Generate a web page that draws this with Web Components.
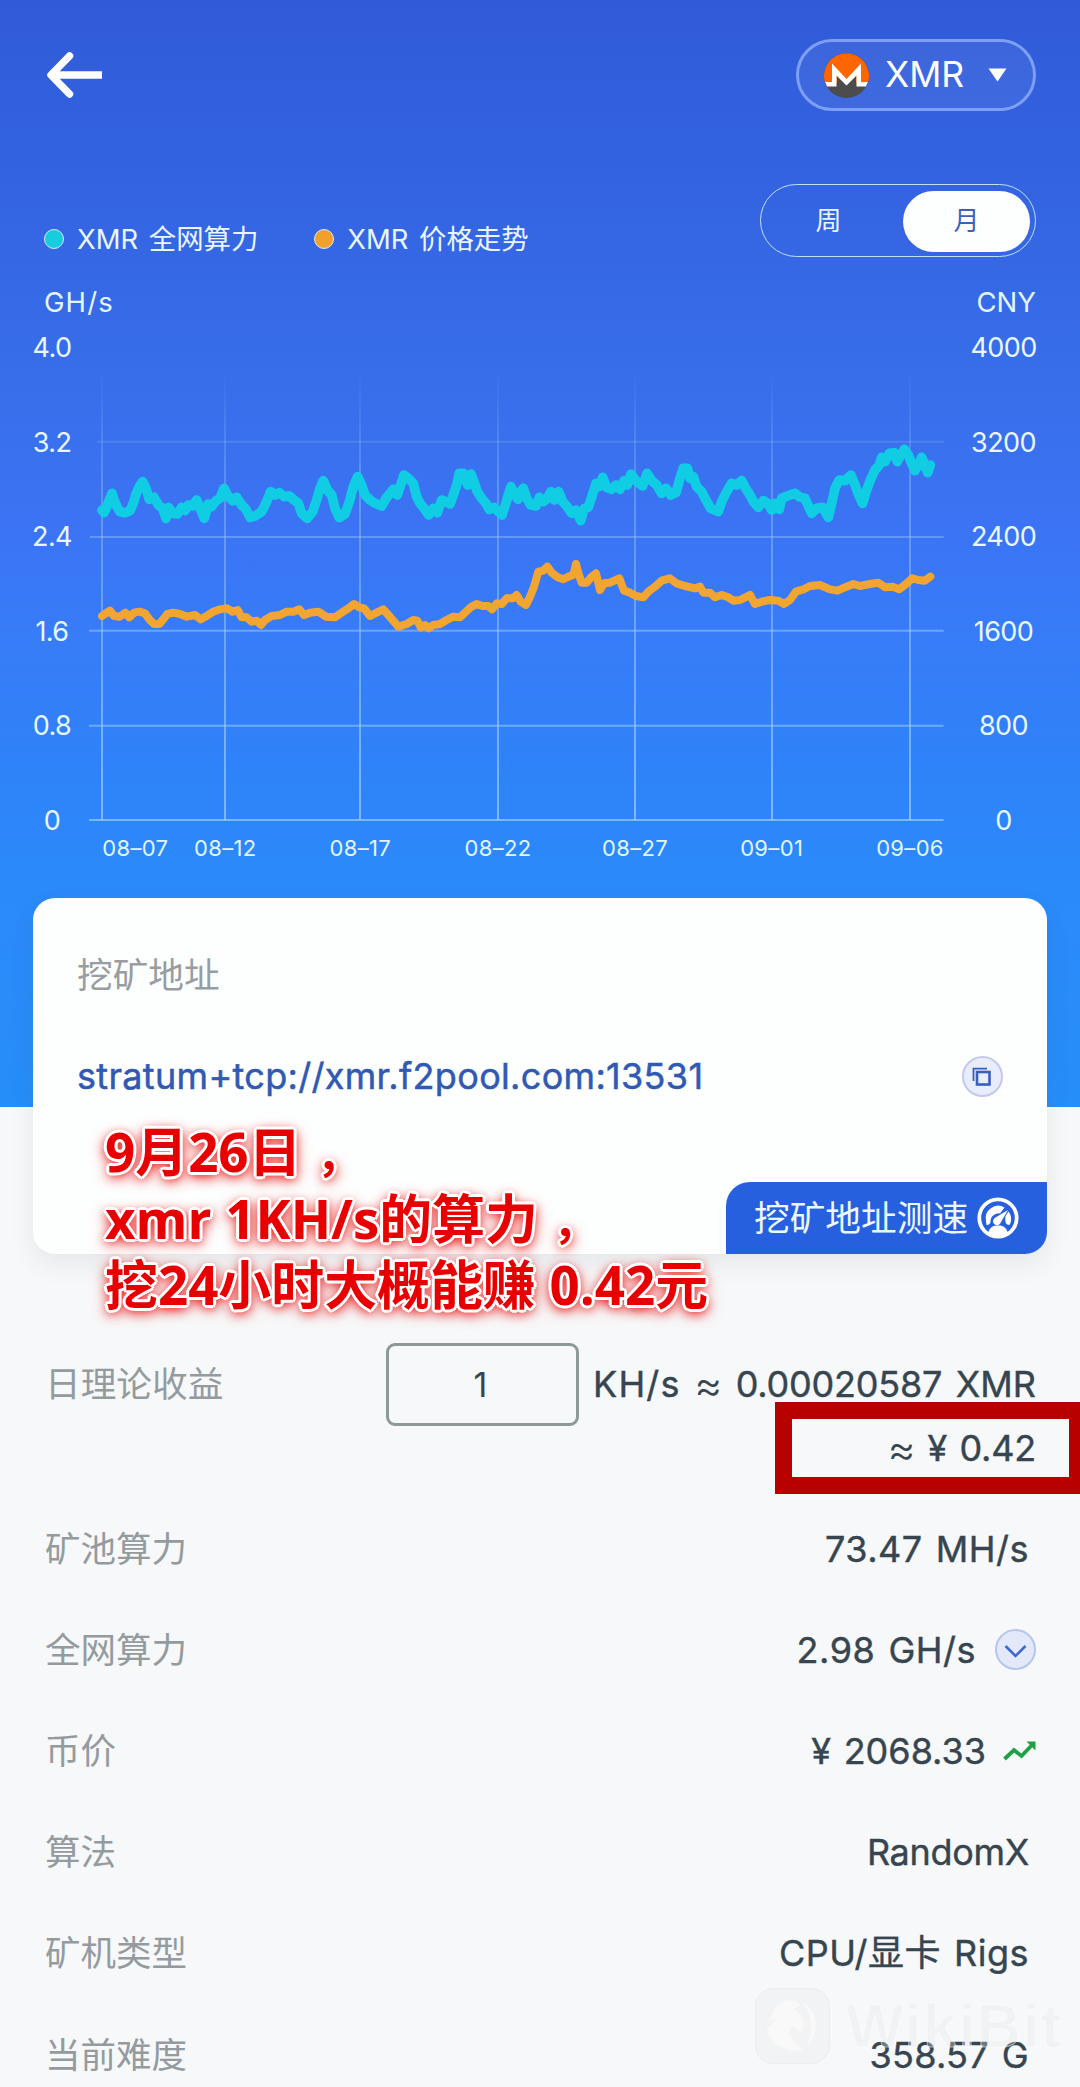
<!DOCTYPE html>
<html lang="zh-CN">
<head>
<meta charset="utf-8">
<title>XMR</title>
<style>
  html, body {
    margin: 0;
    padding: 0;
  }

  body {
    font-family: Inter, "Noto Sans CJK SC", sans-serif;
    width: 1080px;
  }
</style>
</head>
<body>
<pool-page></pool-page>

<script>
// Attach an open shadow root and fill it with styles + markup
function render(el, css, html) {
  el.attachShadow({ mode: 'open' }).innerHTML = `<style>${css}</style>${html}`;
}

// ---------- top bar ----------

class BackArrow extends HTMLElement {
  constructor() {
    super();
    render(this, `
      :host { display: block; width: 56px; height: 46px; }
      svg { display: block; }
    `, `
      <svg width="56" height="46" viewBox="0 0 56 46" fill="none" stroke="#fff" stroke-width="7.5">
        <path d="M22.500 4 4 23 22.500 42" stroke-linecap="round" stroke-linejoin="round"/>
        <path d="M4 23H55"/>
      </svg>
    `);
  }
}
customElements.define('back-arrow', BackArrow);

class CoinSelect extends HTMLElement {
  constructor() {
    super();
    render(this, `
      :host {
        align-items: center;
        background: rgba(255, 255, 255, .06);
        border: 3px solid #7d9ff6;
        border-radius: 36px;
        box-sizing: border-box;
        color: #fff;
        display: flex;
        font-size: 35.500px;
        height: 72px;
        padding: 0 26px 0 25px;
        width: 240px;
      }
      .name { margin-left: 16px; flex: 1; line-height: 40px; }
    `, `
      <svg width="45" height="45" viewBox="0 0 45 45">
        <circle cx="22.5" cy="22.5" r="22.500" fill="#4c4c4c"/>
        <path d="M1.200 30A22.500 22.500 0 1 1 43.800 30Z" fill="#f60"/>
        <path d="M13 21V35H32V21L22.500 29z" fill="#4c4c4c"/>
        <path d="M1.300 29H8V10.500L22.500 26 37 10.500V29H43.700L42 33.500H32.500V22.500L22.500 32.500 12.500 22.500V33.500H3z" fill="#fff"/>
      </svg>
      <span class="name"><slot></slot></span>
      <svg width="19" height="14" viewBox="0 0 19 14"><path d="M.5.5h18L9.500 13.500z" fill="#fff"/></svg>
    `);
  }
}
customElements.define('coin-select', CoinSelect);

// ---------- legend and period switch ----------

class LegendItem extends HTMLElement {
  constructor() {
    super();
    render(this, `
      :host {
        align-items: center;
        color: #e9f6ff;
        display: flex;
        font-size: 27.400px;
        line-height: 34px;
        gap: 13px;
        white-space: nowrap;
        word-spacing: 3px;
      }
      i {
        background: var(--dot);
        border: 1px solid #d5ecff;
        border-radius: 50%;
        box-sizing: border-box;
        height: 20px;
        width: 20px;
      }
    `, `<i></i><span><slot></slot></span>`);
  }
}
customElements.define('legend-item', LegendItem);

class PeriodSwitch extends HTMLElement {
  constructor() {
    super();
    render(this, `
      :host {
        border: 1px solid #bfe0f4;
        border-radius: 37px;
        box-sizing: border-box;
        color: #e9f6ff;
        display: flex;
        font-size: 26px;
        height: 73px;
        line-height: 60px;
        padding: 5.500px 5px;
        text-align: center;
        width: 276px;
      }
      .off { width: 125px; padding-right: 12px; }
      .on {
        background: #fdfffe;
        border-radius: 31px;
        color: #3c62b8;
        height: 61px;
        width: 127px;
      }
    `, `<span class="off">周</span><span class="on">月</span>`);
  }
}
customElements.define('period-switch', PeriodSwitch);

// ---------- chart ----------

// Plot space: 3 units to a pixel
const HASHRATE = `66,270 72,278 80,262 88,240 96,220 104,245 112,262 120,275 135,278 150,272 160,250
  168,222 178,200 188,185 198,205 208,238 222,232 235,255 248,265 258,295 266,262 278,280 292,282
  305,262 315,272 325,255 338,258 350,240 360,265 373,295 384,252 395,260 408,242 420,235 432,205
  444,228 458,242 470,232 485,255 498,268 510,292 525,288 545,275 560,245 572,215 585,225 598,218
  612,230 628,228 642,240 655,250 665,280 682,295 698,275 710,240 720,205 730,182 742,210 755,225
  765,265 778,293 795,282 808,245 820,200 833,170 845,195 855,225 870,240 885,250 905,258 918,235
  940,208 952,225 962,195 972,165 985,175 1000,190 1010,230 1020,250 1032,265 1046,285 1060,265
  1072,278 1085,240 1098,245 1110,252 1120,225 1130,195 1138,160 1150,160 1163,195 1173,162 1182,185
  1192,215 1205,235 1218,250 1228,268 1242,262 1255,275 1266,285 1276,255 1285,225 1293,200 1303,222
  1314,238 1322,215 1330,205 1340,235 1352,255 1368,258 1378,232 1390,245 1402,235 1413,215 1423,240
  1436,215 1448,245 1460,258 1475,280 1488,270 1502,302 1513,265 1525,262 1537,225 1548,190 1558,200
  1568,172 1580,202 1595,208 1608,195 1620,208 1632,182 1642,195 1653,162 1668,182 1688,198 1701,160
  1715,182 1730,195 1745,220 1758,205 1772,225 1788,218 1800,175 1810,145 1822,145 1830,175 1840,170
  1850,200 1865,215 1878,240 1892,265 1915,275 1925,245 1940,215 1955,190 1970,195 1985,182 1997,205
  2010,225 2020,245 2035,262 2050,242 2063,250 2075,270 2085,250 2098,268 2105,235 2122,228 2145,220
  2160,232 2175,235 2195,280 2210,265 2228,262 2245,292 2255,250 2265,205 2278,180 2295,182 2313,165
  2325,195 2338,230 2348,250 2360,210 2372,178 2385,150 2398,135 2405,112 2415,125 2428,100 2442,98
  2452,125 2462,105 2473,88 2485,105 2495,130 2505,152 2515,135 2525,112 2535,135 2543,158 2551,135`;

const PRICE = `66,588 78,580 90,572 102,588 120,590 136,578 148,592 162,578 178,575 195,580 208,598
  222,612 238,612 252,595 262,582 280,578 300,582 320,590 345,585 362,598 380,588 400,575 420,568
  440,565 458,575 473,570 485,592 500,592 515,605 530,602 543,615 555,600 575,588 600,585 620,575
  640,575 658,568 672,585 690,578 715,575 738,590 765,592 785,578 805,565 822,552 838,562 852,565
  870,588 890,578 910,568 925,585 942,605 955,620 980,612 1000,600 1012,602 1022,622 1035,615
  1046,625 1060,615 1080,612 1100,600 1120,590 1140,592 1155,578 1172,562 1190,552 1208,558 1225,558
  1236,568 1250,550 1265,552 1280,535 1298,535 1310,525 1322,545 1338,555 1350,530 1362,500 1375,455
  1390,452 1402,440 1415,458 1430,470 1450,478 1465,470 1480,465 1488,432 1496,462 1505,488 1520,488
  1535,470 1548,460 1560,510 1572,490 1590,488 1618,475 1632,512 1650,518 1668,528 1690,532 1705,515
  1725,500 1745,482 1770,475 1790,490 1815,498 1845,505 1860,500 1870,518 1890,518 1905,532 1925,525
  1945,532 1960,542 1980,540 2010,525 2025,552 2045,545 2070,540 2095,542 2112,552 2130,540 2148,515
  2170,508 2190,498 2220,495 2250,508 2272,512 2300,500 2320,492 2340,498 2370,492 2395,488 2415,502
  2438,500 2457,508 2478,492 2497,475 2515,480 2535,482 2551,470`;

const DAYS = [
  [66, '08–07', 166], [435, '08–12', 436], [840, '08–17', 841], [1254, '08–22', 1254],
  [1665, '08–27', 1665], [2076, '09–01', 2075], [2490, '09–06', 2490]
];
const ROWS = [[52, 65, .16], [30, 351, .32], [27, 632, .42], [27, 917, .44], [27, 1200, .55]];

class TrendChart extends HTMLElement {
  constructor() {
    super();
    const ticks = list => list.split(' ').map(t => `<span>${t}</span>`).join('');

    render(this, `
      :host { color: #e9f8ff; display: flex; height: 539px; }
      .axis {
        display: flex;
        flex-direction: column;
        font-size: 27px;
        height: 505px;
        justify-content: space-between;
        letter-spacing: -.6px;
        line-height: 32px;
        padding-top: 1px;
        text-align: center;
      }
      .left { padding-left: 24px; width: 56px; }
      .right { width: 107px; }
      svg { display: block; margin-top: 29px; }
      text { fill: #e0f6ff; font-size: 66px; letter-spacing: 1px; text-anchor: middle; }
    `, `
      <div class="axis left">${ticks('4.0 3.2 2.4 1.6 0.8 0')}</div>
      <svg width="870" height="510" viewBox="0 -180 2610 1530">
        <defs>
          <linearGradient id="fade" gradientUnits="userSpaceOnUse" x1="0" y1="-150" x2="0" y2="1200">
            <stop offset="0" stop-color="#a8d4ff" stop-opacity="0"/>
            <stop offset=".25" stop-color="#a8d4ff" stop-opacity=".32"/>
            <stop offset="1" stop-color="#a8d4ff" stop-opacity=".65"/>
          </linearGradient>
        </defs>
        ${ROWS.map(([x, y, o]) => `<path d="M${x} ${y}H2591" stroke="#b4e0ff" stroke-opacity="${o}" stroke-width="6"/>`).join('')}
        ${DAYS.map(([x]) => `<rect x="${x - 3}" y="-150" width="6" height="1350" fill="url(#fade)"/>`).join('')}
        <g fill="none" stroke-linejoin="round" stroke-linecap="round">
          <polyline points="${HASHRATE}" stroke="#10cde4" stroke-width="29"/>
          <polyline points="${PRICE}" stroke="#f2a531" stroke-width="24"/>
        </g>
        ${DAYS.map(([, label, x]) => `<text x="${x}" y="1308">${label}</text>`).join('')}
      </svg>
      <div class="axis right">${ticks('4000 3200 2400 1600 800 0')}</div>
    `);
  }
}
customElements.define('trend-chart', TrendChart);

// ---------- address card ----------

class AddressCard extends HTMLElement {
  constructor() {
    super();
    render(this, `
      :host {
        background: #fdfefe;
        border-radius: 22px;
        box-shadow: 0 10px 24px rgba(60, 70, 90, .09);
        box-sizing: border-box;
        display: flex;
        flex-direction: column;
        height: 356px;
        margin: 28px 33px 0;
        overflow: hidden;
      }
      .label { color: #979da1; font-size: 35.700px; line-height: 44px; margin: 55px 0 0 44px; }
      .address {
        align-items: center;
        display: flex;
        justify-content: space-between;
        margin: 58px 44px 0 44px;
        height: 42px;
      }
      .url {
        -webkit-text-stroke: .5px;
        color: #3059b4;
        font-size: 36px;
        letter-spacing: .320px;
        white-space: nowrap;
      }
      .speed {
        align-items: center;
        align-self: flex-end;
        background: #2760de;
        border-radius: 24px 0 0 0;
        box-sizing: border-box;
        color: #ecf8ff;
        display: flex;
        font-size: 35.700px;
        gap: 9px;
        height: 72px;
        line-height: 44px;
        margin-top: auto;
        padding: 0 28px;
        width: 321px;
        white-space: nowrap;
      }
      svg { flex: none; }
    `, `
      <div class="label">挖矿地址</div>
      <div class="address">
        <span class="url"><slot></slot></span>
        <svg width="41" height="41" viewBox="0 0 41 41">
          <circle cx="20.500" cy="20.500" r="19.500" fill="#e9edfb" stroke="#c3c8ec" stroke-width="2"/>
          <rect x="15" y="16" width="12.500" height="12.500" fill="none" stroke="#3560bd" stroke-width="2.600"/>
          <path d="M11.500 25V12.700H25" fill="none" stroke="#3560bd" stroke-width="1.800"/>
        </svg>
      </div>
      <div class="speed">
        <span>挖矿地址测速</span>
        <svg width="42" height="42" viewBox="0 0 42 42">
          <circle cx="21" cy="21" r="18.700" fill="none" stroke="#fff" stroke-width="3.800"/>
          <path d="M9 24A12.500 12.500 0 0 1 27.500 10.500L23 16.500A8 8 0 0 0 13.500 25Q13 28 9.500 28z" fill="#fff"/>
          <path d="M31.500 14.500A12.500 12.500 0 0 1 32.500 28Q29 28 28.500 25T28.500 19z" fill="#fff"/>
          <path d="M11 36C13 30 16 28.500 21 28.500S29 30 31 36L26 39.500H16z" fill="#fff"/>
          <path d="M31 13 24 25A4 4 0 1 1 18.500 20.500z" fill="#fff"/>
        </svg>
      </div>
    `);
  }
}
customElements.define('address-card', AddressCard);

// ---------- figures ----------

class IncomeRow extends HTMLElement {
  constructor() {
    super();
    render(this, `
      :host { display: block; margin: 89px 44px 28px 45px; color: #36454f; font-size: 36px; }
      .top { align-items: center; display: flex; height: 83px; }
      .label { color: #949b9f; font-size: 35.700px; line-height: 42px; padding-bottom: 1px; width: 341px; }
      .rate {
        border: 3px solid #8c9997;
        border-radius: 9px;
        box-sizing: border-box;
        font-size: 34px;
        height: 83px;
        line-height: 77px;
        padding-right: 4px;
        text-align: center;
        width: 193px;
      }
      .result, .fiat { -webkit-text-stroke: .4px; white-space: nowrap; line-height: 44px; }
      .result {
        display: flex;
        flex: 1;
        justify-content: space-between;
        margin-left: 14px;
        padding-bottom: 2px;
      }
      .unit { letter-spacing: 1.200px; }
      .num { letter-spacing: -.2px; }
      .approx { -webkit-text-stroke: 0; font-size: 43px; font-weight: 300; }
      .fiat { display: flex; justify-content: flex-end; gap: 12px; }
    `, `
      <div class="top">
        <span class="label">日理论收益</span>
        <span class="rate">1</span>
        <span class="result">
          <span class="unit">KH/s</span><span class="approx">≈</span><span class="num">0.00020587</span><span>XMR</span>
        </span>
      </div>
      <div class="fiat"><span class="approx">≈</span><span>¥</span><span class="num">0.42</span></div>
    `);
  }
}
customElements.define('income-row', IncomeRow);

class StatRow extends HTMLElement {
  constructor() {
    super();
    render(this, `
      :host {
        align-items: center;
        color: #36454f;
        display: flex;
        font-size: 36px;
        height: 101.200px;
        justify-content: space-between;
        line-height: 44px;
        margin: 0 51px 0 45px;
      }
      :host([icon]) { margin-right: 44px; }
      .label { color: #949b9f; font-size: 35.500px; padding-top: 2px; }
      .value {
        -webkit-text-stroke: .4px;
        align-items: center;
        display: flex;
        white-space: nowrap;
        letter-spacing: var(--track, .3px);
        word-spacing: 2.500px;
      }
      ::slotted(svg) { margin-left: 19px; }
    `, `
      <span class="label">${this.getAttribute('label')}</span>
      <span class="value"><slot></slot></span>
    `);
  }
}
customElements.define('stat-row', StatRow);

// ---------- overlays ----------

class RedNote extends HTMLElement {
  constructor() {
    super();
    render(this, `
      :host {
        color: #e80000;
        font: bold 52.900px/66px "Open Sans", "Noto Sans CJK SC", sans-serif;
        left: 105px;
        position: absolute;
        top: 1118px;
        white-space: nowrap;
      }
      div {
        height: 66.500px;
        text-shadow: 3px 0 #fff, -3px 0 #fff, 0 3px #fff, 0 -3px #fff,
          2px 2px #fff, -2px 2px #fff, 2px -2px #fff, -2px -2px #fff,
          0 2px 8px rgba(235, 0, 0, .8), 3px 4px 14px rgba(235, 0, 0, .6), -3px 4px 14px rgba(235, 0, 0, .6);
      }
      .c { font-size: 44px; margin-left: 15px; }
    `, `
      <div>9月26日<span class="c">，</span></div>
      <div>xmr 1KH/s的算力<span class="c">，</span></div>
      <div>挖24小时大概能赚 0.42元</div>
    `);
  }
}
customElements.define('red-note', RedNote);

class RedFrame extends HTMLElement {
  constructor() {
    super();
    render(this, `
      :host {
        border: 17px solid #b90000;
        border-right-width: 11px;
        box-sizing: border-box;
        height: 92px;
        left: 775px;
        position: absolute;
        top: 1402px;
        width: 305px;
      }
    `, '');
  }
}
customElements.define('red-frame', RedFrame);

class WikiMark extends HTMLElement {
  constructor() {
    super();
    render(this, `
      :host {
        align-items: center;
        color: rgba(228, 229, 231, .32);
        display: flex;
        font: bold 61px/76px "Liberation Sans", sans-serif;
        gap: 16px;
        left: 755px;
        letter-spacing: 1.500px;
        position: absolute;
        top: 1988px;
      }
      span { -webkit-text-stroke: 1px rgba(255, 255, 255, .5); }
    `, `
      <svg width="75" height="76" viewBox="0 0 75 76">
        <rect x=".5" y=".5" width="74" height="75" rx="18" fill="#e9eaeb" fill-opacity=".35" stroke="#e4e5e6" stroke-opacity=".5"/>
        <path d="M20 20C28 10 42 10 46 18L38 21C48 26 52 34 46 45L38 38 34 44C36 52 42 56 48 62C28 66 14 54 12 40L22 31 14 32z" fill="#fafafa" fill-opacity=".8"/>
        <path d="M47 14C64 24 66 46 51 58C59 42 58 28 47 14z" fill="#fafafa" fill-opacity=".8"/>
      </svg>
      <span>WikiBit</span>
    `);
  }
}
customElements.define('wiki-mark', WikiMark);

// ---------- page ----------

class PoolPage extends HTMLElement {
  constructor() {
    super();
    render(this, `
      :host {
        background: linear-gradient(#305bd8 0, #3464e2 200px, #386ee9 380px, #3b73f4 520px, #377cf8 640px,
          #2f82f9 760px, #2b8afa 880px, #268ef8 1107px, #f7f8f9 1107px);
        display: block;
        height: 2087px;
        overflow: hidden;
        position: relative;
        width: 1080px;
      }
      .bar, .tools, .units { display: flex; justify-content: space-between; }
      .bar { align-items: center; padding: 39px 44px 0 47px; }
      .tools { margin-top: 73px; padding: 0 44px; }
      .legend { display: flex; gap: 56px; padding-top: 38px; height: 34px; }
      .units {
        color: #e4f5ff;
        font-size: 27.500px;
        line-height: 32px;
        margin: 29px 44px 13px;
      }
      .speed { letter-spacing: 1.100px; }
    `, `
      <div class="bar">
        <back-arrow></back-arrow>
        <coin-select>XMR</coin-select>
      </div>
      <div class="tools">
        <div class="legend">
          <legend-item style="--dot: #17cddd">XMR 全网算力</legend-item>
          <legend-item style="--dot: #f2a02c">XMR 价格走势</legend-item>
        </div>
        <period-switch></period-switch>
      </div>
      <div class="units"><span class="speed">GH/s</span><span>CNY</span></div>
      <trend-chart></trend-chart>
      <address-card>stratum+tcp://xmr.f2pool.com:13531</address-card>

      <income-row></income-row>
      <stat-row label="矿池算力" style="--track: .5px">73.47 MH/s</stat-row>
      <stat-row label="全网算力" icon style="--track: .5px">2.98 GH/s
        <svg width="41" height="41" viewBox="0 0 41 41">
          <circle cx="20.500" cy="20.500" r="19.500" fill="#e3e9fb" stroke="#b4c6ee" stroke-width="2"/>
          <path d="M10.500 17 20.500 27 30.500 17" fill="none" stroke="#3a6bd0" stroke-width="2.500"/>
        </svg>
      </stat-row>
      <stat-row label="币价" icon style="--track: 0px">¥ 2068.33
        <svg width="33" height="20" viewBox="0 0 33 20" style="margin-left: 17px">
          <path d="M1.500 18 11 9 18.500 15 29.500 3.500" fill="none" stroke="#20a046" stroke-width="3.800"/>
          <path d="M23.500 .5h9V9.500z" fill="#20a046"/>
        </svg>
      </stat-row>
      <stat-row label="算法" style="--track: -.3px">RandomX</stat-row>
      <stat-row label="矿机类型" style="--track: .5px">CPU/显卡 Rigs</stat-row>
      <stat-row label="当前难度">358.57 G</stat-row>

      <wiki-mark></wiki-mark>
      <red-note></red-note>
      <red-frame></red-frame>
    `);
  }
}
customElements.define('pool-page', PoolPage);
</script>
</body>
</html>
